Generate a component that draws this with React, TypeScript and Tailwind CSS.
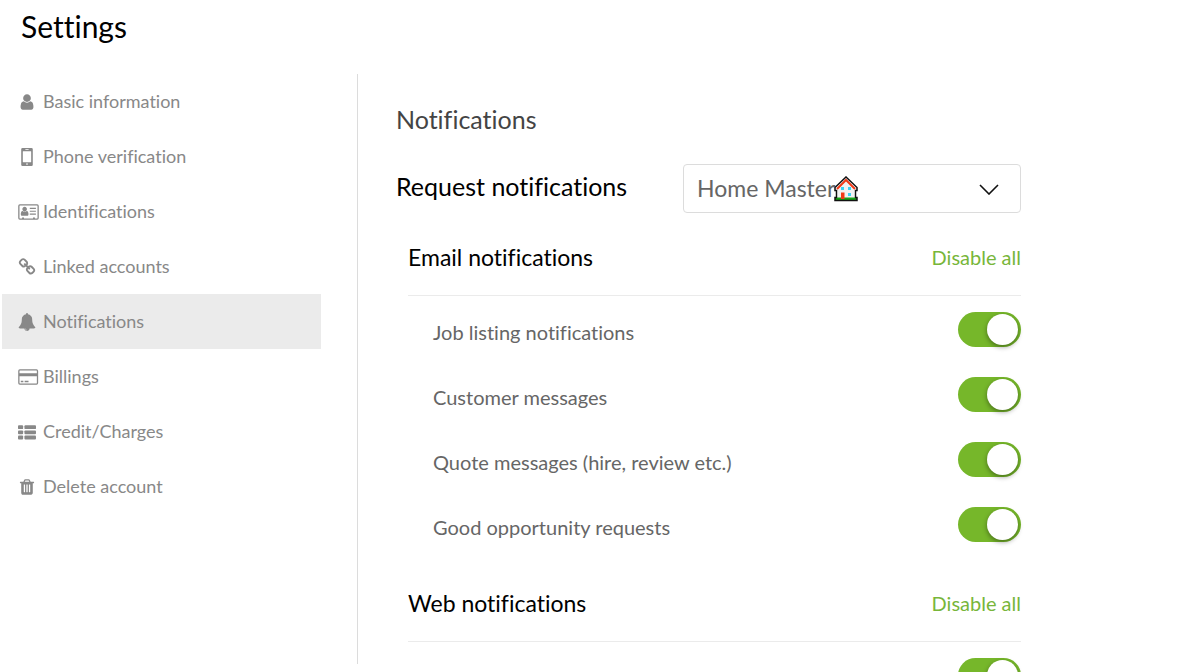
import React from "react";

type IconProps = { children: React.ReactNode; wide?: boolean };

const Glyph: React.FC<IconProps> = ({ children, wide }) => (
  <svg
    viewBox={wide ? "0 0 2048 1792" : "0 0 1792 1792"}
    className={wide ? "h-[18px] w-[21px] shrink-0" : "h-[18px] w-[18px] shrink-0"}
    fill="currentColor"
    aria-hidden="true"
  >
    {children}
  </svg>
);

const UserIcon = () => (
  <Glyph>
    <path d="M1536 1399q0 109-62.5 187t-150.5 78h-854q-88 0-150.5-78t-62.5-187q0-85 8.5-160.5t31.5-152 58.5-131 94-89 134.5-34.5q131 128 313 128t313-128q76 0 134.5 34.5t94 89 58.5 131 31.5 152 8.5 160.5zm-256-887q0 159-112.5 271.5t-271.5 112.5-271.5-112.5-112.5-271.5 112.5-271.5 271.5-112.5 271.5 112.5 112.5 271.5z" />
  </Glyph>
);

const PhoneIcon = () => (
  <Glyph>
    <path
      fillRule="evenodd"
      d="M448 0h896q128 0 128 128v1536q0 128-128 128h-896q-128 0-128-128v-1536q0-128 128-128zM512 320q-32 0-32 32v1024q0 32 32 32h768q32 0 32-32v-1024q0-32-32-32zM736 128v64h320v-64zM976 1600a80 80 0 1 0-160 0 80 80 0 1 0 160 0z"
    />
  </Glyph>
);

const IdCardIcon = () => (
  <Glyph wide>
    <path d="M1024 1131q0-64-9-117.5t-29.5-103-60.5-78-97-28.5q-6 4-30 18t-37.5 21.5-35.5 17.5-43 14.500-42 4.500-42-4.500-43-14.500-35.500-17.500-37.500-21.500-30-18q-57 0-97 28.500t-60.500 78-29.500 103-9 117.500 37 106.500 91 42.500h512q54 0 91-42.500t37-106.500zM867 608q0-94-66.500-160.500t-160.500-66.500-160.500 66.500-66.500 160.500 66.500 160.500 160.500 66.500 160.500-66.500 66.500-160.500z" />
    <path d="M1152 480h608v112h-608zM1152 768h608v112h-608zM1152 1056h608v112h-608z" />
    <path
      fillRule="evenodd"
      d="M160 128h1728q160 0 160 160v1216q0 160-160 160h-1728q-160 0-160-160v-1216q0-160 160-160zM160 256q-32 0-32 32v1216q0 32 32 32h224v-96h192v96h896v-96h192v96h224q32 0 32-32v-1216q0-32-32-32z"
    />
  </Glyph>
);

const LinkIcon = () => (
  <Glyph>
    <path d="M1520 1216q0-40-28-68l-208-208q-28-28-68-28-42 0-72 32 3 3 19 18.500t21.500 21.500 15 19 13 25.500 3.500 27.500q0 40-28 68t-68 28q-15 0-27.500-3.500t-25.500-13-19-15-21.500-21.500-18.500-19q-33 31-33 73 0 40 28 68l206 207q27 27 68 27 40 0 68-26l147-146q28-28 28-67zm-703-705q0-40-28-68l-206-207q-28-28-68-28-39 0-68 27l-147 146q-28 28-28 67 0 40 28 68l208 208q27 27 68 27 42 0 72-31-3-3-19-18.500t-21.500-21.500-15-19-13-25.500-3.500-27.500q0-40 28-68t68-28q15 0 27.500 3.500t25.500 13 19 15 21.500 21.500 18.500 19q33-31 33-73zm895 705q0 120-85 203l-147 146q-83 83-203 83-121 0-204-85l-206-207q-83-83-83-203 0-123 88-209l-88-88q-86 88-208 88-120 0-204-84l-208-208q-84-84-84-204t85-203l147-146q83-83 203-83 121 0 204 85l206 207q83 83 83 203 0 123-88 209l88 88q86-88 208-88 120 0 204 84l208 208q84 84 84 204z" />
  </Glyph>
);

const BellIcon = () => (
  <Glyph>
    <path d="M912 1696q0-16-16-16-59 0-101.500-42.500t-42.500-101.500q0-16-16-16t-16 16q0 73 51.500 124.500t124.500 51.500q16 0 16-16zm816-288q0 52-38 90t-90 38h-448q0 106-75 181t-181 75-181-75-75-181h-448q-52 0-90-38t-38-90q50-42 91-88t85-119.500 74.500-158.500 50-206 19.500-260q0-152 117-282.500t307-158.500q-8-19-8-39 0-40 28-68t68-28 68 28 28 68q0 20-8 39 190 28 307 158.500t117 282.500q0 139 19.500 260t50 206 74.500 158.500 85 119.500 91 88z" />
  </Glyph>
);

const CreditCardIcon = () => (
  <Glyph wide>
    <path
      fillRule="evenodd"
      d="M160 128h1664q160 0 160 160v1216q0 160-160 160h-1664q-160 0-160-160v-1216q0-160 160-160zM160 256q-32 0-32 32v224h1728v-224q0-32-32-32zM128 832v672q0 32 32 32h1664q32 0 32-32v-672zM256 1280h256v128h-256zM640 1280h384v128h-384z"
    />
  </Glyph>
);

const ListIcon = () => (
  <Glyph>
    {[224, 736, 1248].map((y) => (
      <React.Fragment key={y}>
        <rect x="0" y={y} width="512" height="384" rx="96" />
        <rect x="640" y={y} width="1152" height="384" rx="96" />
      </React.Fragment>
    ))}
  </Glyph>
);

const TrashIcon = () => (
  <Glyph>
    <path d="M704 1376v-704q0-14-9-23t-23-9h-64q-14 0-23 9t-9 23v704q0 14 9 23t23 9h64q14 0 23-9t9-23zm256 0v-704q0-14-9-23t-23-9h-64q-14 0-23 9t-9 23v704q0 14 9 23t23 9h64q14 0 23-9t9-23zm256 0v-704q0-14-9-23t-23-9h-64q-14 0-23 9t-9 23v704q0 14 9 23t23 9h64q14 0 23-9t9-23zm-544-992h448l-48-117q-7-9-17-11h-317q-10 2-17 11zm928 32v64q0 14-9 23t-23 9h-96v948q0 83-47 143.500t-113 60.500h-832q-66 0-113-58.500t-47-141.500v-952h-96q-14 0-23-9t-9-23v-64q0-14 9-23t23-9h309l70-167q15-37 54-63t79-26h320q40 0 79 26t54 63l70 167h309q14 0 23 9t9 23z" />
  </Glyph>
);

const HouseIcon = () => (
  <svg viewBox="0 0 24 26" className="h-[26px] w-6" aria-hidden="true">
    <path d="M4 11 12 4l8 7v12H4z" fill="#f2f2f2" />
    <path d="M1 21.500h22V25H1z" fill="#16a516" />
    <path d="M3 13 12 4 21 13" fill="none" stroke="#f03a17" strokeWidth="2" />
    <path
      d="M1 24.500V21.500h1.500V14.500H1V11.500L12 1l11 10.500v3h-1.500v7H23v3z"
      fill="none"
      stroke="#111"
      strokeWidth="1.500"
    />
    <path d="M7 11h3v3H7zM14 11h3v3h-3zM14 17h3v3h-3z" fill="#3cd3f5" />
    <path d="M7 16.500h3.500V23H7z" fill="#f03a17" />
  </svg>
);

const NAV_ITEMS = [
  { label: "Basic information", Icon: UserIcon },
  { label: "Phone verification", Icon: PhoneIcon },
  { label: "Identifications", Icon: IdCardIcon },
  { label: "Linked accounts", Icon: LinkIcon },
  { label: "Notifications", Icon: BellIcon, active: true },
  { label: "Billings", Icon: CreditCardIcon },
  { label: "Credit/Charges", Icon: ListIcon },
  { label: "Delete account", Icon: TrashIcon },
];

const OPTIONS = [
  "Job listing notifications",
  "Customer messages",
  "Quote messages (hire, review etc.)",
  "Good opportunity requests",
];

const NotificationGroup: React.FC<{ title: string }> = ({ title }) => (
  <section className="pl-3">
    <div className="flex items-center justify-between border-b border-[#ebebeb] pt-[29px] pb-[23px] leading-[30px]">
      <h3 className="text-[23px] text-black">{title}</h3>
      <button type="button" className="text-xl leading-[30px] text-[#78b63a]">
        Disable all
      </button>
    </div>
    <ul className="pb-[3px]">
      {OPTIONS.map((option) => (
        <li key={option}>
          <label className="flex h-[65px] items-start justify-between pt-4 pl-[25px]">
            <span className="pt-[5px] text-xl leading-[30px] text-[#666]">{option}</span>
            <input
              type="checkbox"
              defaultChecked
              className="flex h-[35px] w-[63px] shrink-0 appearance-none items-center rounded-full bg-gray-300 px-[3px] before:size-[31px] before:rounded-full before:bg-white before:shadow-[0_2px_5px_rgba(0,0,0,0.4)] checked:justify-end checked:bg-[#76b72a]"
            />
          </label>
        </li>
      ))}
    </ul>
  </section>
);

const App: React.FC = () => {
  return (
    <div className="h-screen overflow-hidden bg-white font-['Lato',sans-serif] [font-variant-ligatures:none]">
      <h1 className="h-[74px] pt-2 pl-[21px] text-[30px] leading-9 text-black">
        Settings
      </h1>

      <div className="flex items-start">
        {/* Sidebar */}
        <aside className="h-[calc(100vh-82px)] w-[358px] shrink-0 border-r border-[#dcdcdc] pr-9 pl-0.5">
          <nav>
            {NAV_ITEMS.map(({ label, Icon, active }) => (
              <a
                key={label}
                href="#"
                className={`flex h-[55px] items-center pl-4 text-[18px] text-[#888] ${
                  active ? "bg-[#ebebeb]" : ""
                }`}
              >
                <span className="w-[25px]">
                  <Icon />
                </span>
                {label}
              </a>
            ))}
          </nav>
        </aside>

        {/* Notification preferences */}
        <main className="max-w-[663px] flex-1 pl-[38px]">
          <h2 className="pt-[30px] text-[25px] leading-[30px] text-[#444]">Notifications</h2>
          <div className="flex items-start justify-between pt-[30px]">
            <label htmlFor="request" className="text-[25px] leading-[44px] text-black">
              Request notifications
            </label>
            <div className="relative w-[338px]">
              <select
                id="request"
                className="block h-[49px] w-full appearance-none rounded border border-[#dcdcdc] bg-white px-[13px] text-[23px] text-[#666]"
              >
                <option>Home Master</option>
              </select>
              <span className="pointer-events-none absolute top-3 left-[151px]">
                <HouseIcon />
              </span>
              <svg
                viewBox="0 0 20 12"
                className="pointer-events-none absolute top-[19px] right-[22px] h-3 w-5"
                fill="none"
                stroke="#111"
                strokeWidth="1.6"
                aria-hidden="true"
              >
                <path d="m1 2 9 9 9-9" />
              </svg>
            </div>
          </div>

          <NotificationGroup title="Email notifications" />
          <NotificationGroup title="Web notifications" />
        </main>
      </div>
    </div>
  );
};

export default App;
